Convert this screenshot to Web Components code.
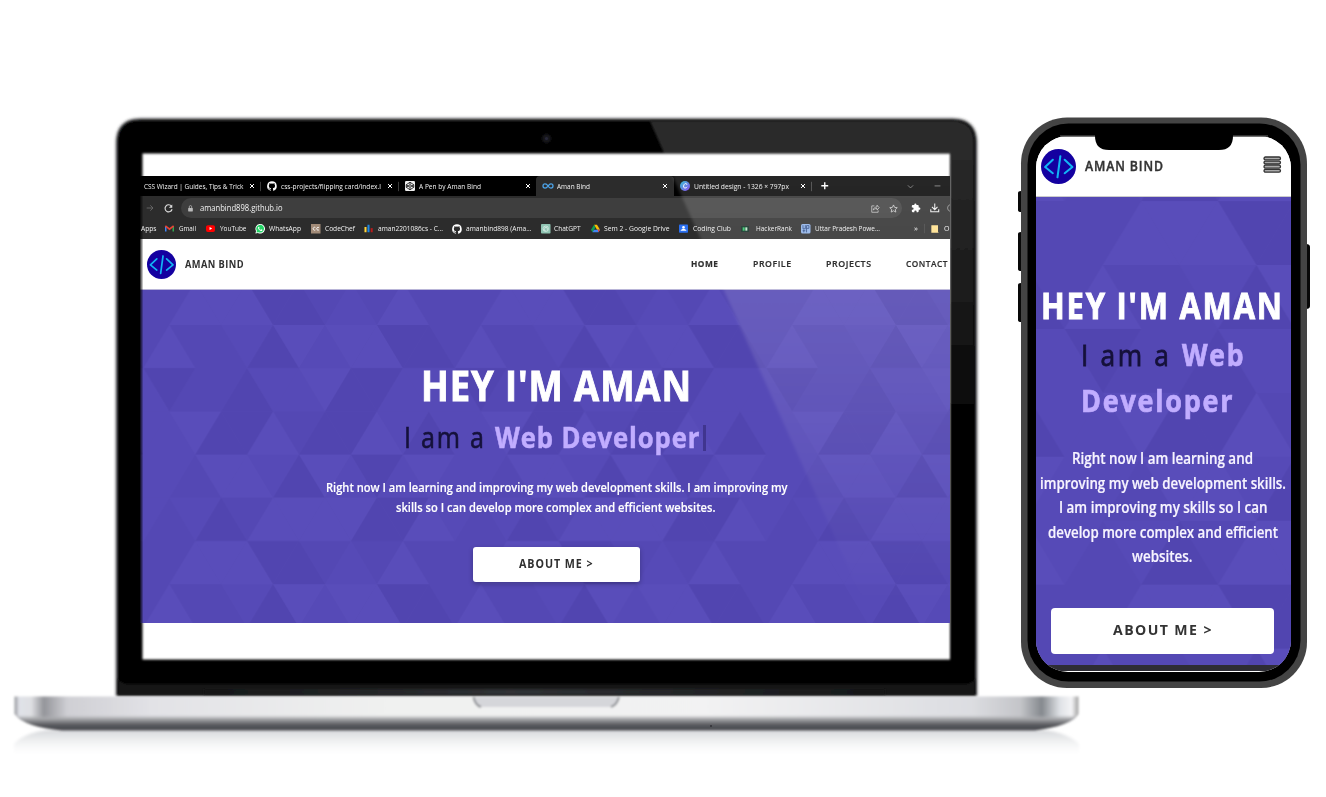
<!DOCTYPE html>
<html lang="en"><head><meta charset="utf-8"><title>Aman Bind – device preview</title>
<style>html,body{margin:0;width:1326px;height:797px;overflow:hidden;background:#fff;font-family:"Open Sans","Noto Sans",sans-serif}</style></head>
<body><device-stage></device-stage>
<script>
const make=(name,html,after)=>customElements.define(name,class extends HTMLElement{
  connectedCallback(){ if(this.shadowRoot)return; const r=this.attachShadow({mode:'open'});
    const t=document.createElement('template'); t.innerHTML=typeof html==='function'?html(this):html;
    r.appendChild(t.content.cloneNode(true)); if(after)after(this,r);}
});

// A single line of text that always fills the width given in its "w" attribute.
make('fit-text','<style>:host{display:block;flex:none;white-space:nowrap}span{display:inline-block;transform-origin:0 50%;white-space:pre}</style><span><slot></slot></span>',(h,r)=>{
  const w=+h.getAttribute('w'),s=r.querySelector('span'); h.style.width=w+'px';
  const ls=parseFloat(getComputedStyle(h).letterSpacing)||0, n=s.getBoundingClientRect().width-ls;
  if(n>0)s.style.transform='scaleX('+(w/n)+')';
});

const icons={
 x:'<path d="M4 4l16 16M20 4L4 20" stroke="#fff" stroke-width="4"/>',
 plus:'<path d="M12 1v22M1 12h22" stroke="#fff" stroke-width="4.4"/>',
 chev:'<path d="M3 8l9 9 9-9" stroke="#999" stroke-width="2.4" fill="none"/>',
 minus:'<path d="M2 10h20" stroke="#999" stroke-width="2.6"/>',
 github:'<path fill="#fff" d="M12 .6A11.7 11.7 0 0 0 8.300 23.400c.6.1.8-.3.8-.6v-2.200c-3.300.7-4-1.400-4-1.400-.5-1.300-1.300-1.700-1.300-1.700-1.100-.7.1-.7.1-.7 1.200.1 1.800 1.200 1.800 1.200 1 1.800 2.800 1.300 3.400 1 .1-.8.4-1.300.8-1.600-2.700-.3-5.500-1.300-5.500-5.900 0-1.300.5-2.300 1.200-3.200-.1-.3-.5-1.500.1-3.100 0 0 1-.3 3.200 1.200a11 11 0 0 1 5.900 0c2.200-1.500 3.200-1.200 3.200-1.200.6 1.600.2 2.800.1 3.100.8.9 1.200 1.900 1.200 3.200 0 4.600-2.800 5.600-5.500 5.900.4.4.8 1.100.8 2.200v3.200c0 .3.2.7.8.6A11.700 11.700 0 0 0 12 .6"/>',
 codepen:'<rect width="24" height="24" rx="3" fill="#eee"/><g fill="none" stroke="#111" stroke-width="2"><path d="M12 3l9 6v6l-9 6-9-6V9z"/><path d="M3 9l9 6 9-6M3 15l9-6 9 6M12 3v6M12 15v6"/></g>',
 inf:'<path d="M12 12c-3-5-5.500-5-7-5a5 5 0 0 0 0 10c2 0 4-1 7-5s5-5 7-5a5 5 0 0 1 0 10c-1.500 0-4 0-7-5z" fill="none" stroke="#4ca3e8" stroke-width="3"/>',
 canva:'<defs><linearGradient id="c" x1="0" x2="1" y2="1"><stop stop-color="#14b9cf"/><stop offset="1" stop-color="#7b2ff0"/></linearGradient></defs><circle cx="12" cy="12" r="12" fill="url(#c)"/><path d="M16.500 9c0-4-5-4-7 0s-1 8 2.500 8c2.500 0 4-1.500 5-3" fill="none" stroke="#fff" stroke-width="2.200"/>',
 arrow:'<path d="M2 12h18M13 4l8 8-8 8" stroke="#777" stroke-width="2.2" fill="none"/>',
 reload:'<path d="M20 6a9.500 9.500 0 1 0 1.500 8" fill="none" stroke="#ddd" stroke-width="3"/><path d="M22 1v9h-9z" fill="#ddd"/>',
 lock:'<rect x="4" y="10" width="16" height="12" rx="1.500" fill="#bbb"/><path d="M8 11V6a4 4 0 0 1 8 0v5" fill="none" stroke="#bbb" stroke-width="2.600"/>',
 share:'<path d="M9 5H2v17h17v-5M6 16c1-6 5-8 10-8V3l6 7-6 6v-4c-4 0-7 1-10 4z" fill="none" stroke="#ccc" stroke-width="2"/>',
 star:'<path d="M12 2.500l3 6.500 7 .8-5.200 4.800 1.400 7L12 18l-6.200 3.600 1.400-7L2 9.800 9 9z" fill="none" stroke="#ddd" stroke-width="2"/>',
 puzzle:'<path fill="#fff" d="M20 11h-1.500V7a2 2 0 0 0-2-2H13V3.500a2.500 2.500 0 0 0-5 0V5H4a2 2 0 0 0-2 2v4h1.500a2.700 2.700 0 0 1 0 5.400H2V20a2 2 0 0 0 2 2h4v-1.500a2.700 2.700 0 0 1 5.400 0V22h3.100a2 2 0 0 0 2-2v-4H20a2.500 2.500 0 0 0 0-5"/>',
 down:'<path d="M12 1v15M5 10l7 7 7-7M2 16v6h20v-6" stroke="#eee" stroke-width="2.700" fill="none"/>',
 ring:'<path d="M24 2A10.500 10.500 0 0 0 24 22" stroke="#888" stroke-width="3" fill="none"/>',
 gmail:'<path d="M2 20V6" stroke="#4285f4" stroke-width="4"/><path d="M22 20V6" stroke="#34a853" stroke-width="4"/><path d="M1 5l11 9 11-9" stroke="#ea4335" stroke-width="4.500" fill="none"/>',
 yt:'<rect y="3" width="24" height="18" rx="5" fill="#f00"/><path d="M9.500 8v8l7-4z" fill="#fff"/>',
 wa:'<path d="M1 23l1.500-6A11.500 11.500 0 1 1 7 21.500z" fill="#fff"/><path d="M3.500 20.500l1-4.200A9.300 9.300 0 1 1 8 19.500z" fill="#25d366"/><path d="M8 6.500c-3 4 4 11.500 8.500 10 2-1 1.500-2.500 1-2.800l-2-1c-1 0-1 1.500-2 1.300-1.500-.5-3-2-3.500-3.500 0-.8 1.300-.8 1-2z" fill="#fff"/>',
 cc:'<rect width="24" height="24" fill="#a28b78"/><path d="M11 9a3.600 3.600 0 1 0 0 6M20 9a3.600 3.600 0 1 0 0 6" fill="none" stroke="#fff" stroke-width="2.300"/>',
 bars:'<path d="M4 22V8" stroke="#ffd43b" stroke-width="5.500"/><path d="M12 22V2" stroke="#1e88e5" stroke-width="5.500"/><path d="M20.500 22V11" stroke="#b71c1c" stroke-width="5.500"/>',
 gpt:'<rect width="24" height="24" rx="2" fill="#8fc3b2"/><g fill="none" stroke="#d9eee7" stroke-width="1.700"><circle cx="12" cy="12" r="7"/><path d="M8 7l8 3v7M16 7l-8 4v7M6 14l7 4"/></g>',
 drive:'<path d="M8 2h8l8 13h-8z" fill="#fbbc04"/><path d="M8 2l4 7L4 22l-4-7z" fill="#0f9d58"/><path d="M8 15h16l-4 7H4z" fill="#4285f4"/><path d="M18 15h6l-4 7z" fill="#ea4335"/>',
 club:'<rect y="1" width="24" height="22" rx="2" fill="#2a6ff0"/><circle cx="12" cy="9" r="3.500" fill="#fff"/><path d="M4 18c2-6 14-6 16 0z" fill="#fff"/>',
 hr:'<rect y="3" width="24" height="18" fill="#0b2b20"/><path d="M5 7h6v10H5z" fill="#2ec866"/><path d="M13 7h6v10h-6z" fill="#b9e8c9"/>',
 up:'<rect width="24" height="24" rx="4" fill="#8fb2e8"/><path d="M5 3v9h6V3M14 21V4h6v7h-6M4 17h7M7 14v7" fill="none" stroke="#24427e" stroke-width="2"/>',
 folder:'<path d="M1 1h20v19l2 3H1z" fill="#ffe08a"/>',
 sep:'<path d="M12 -4v32" stroke="#444" stroke-width="3"/>'
};
make('ui-icon',h=>`<style>:host{display:block;flex:none}svg{display:block;width:100%;height:100%;overflow:visible}</style><svg viewBox="0 0 24 24">${icons[h.getAttribute('name')]}</svg>`,h=>{h.style.width=h.style.height=h.getAttribute('s')+'px'});

// Builds a flow row from [start, width, content]; the gap before each item becomes its margin.
const flow=(from,items)=>{let p=from;return items.map(([x,w,c])=>{const m=x-p;p=x+w;
  return c[0]==='@'?`<ui-icon name="${c.slice(1)}" s="${w}" style="margin-left:${m}px"></ui-icon>`:`<fit-text w="${w}" style="margin-left:${m}px">${c}</fit-text>`}).join('')};

make('brand-mark','<style>:host{display:block;flex:none}svg{display:block;width:100%;height:100%}</style><svg viewBox="0 0 34 34"><circle cx="17" cy="17" r="17" fill="#1400a0"/><g fill="none" stroke="#12b4f5" stroke-width="2" stroke-linecap="round" stroke-linejoin="round"><path d="M11.500 10.500L4 17.500l7.500 6"/><path d="M23 10.500l7.500 7-7.500 6"/><path d="M18.800 7l-2.800 20.500"/></g></svg>');

// Triangle mosaic: "d,u" = down/up triangle, its centre column, then its shade.
const shades={l:'#594dba',m:'#564ab7',d:'#5145b0'};
const mosaic=['u1l u3b d4m u5d d6l u7m d8l u9l d10d u11d d12b',
 'd1d u2b d3b u4d d5m u6m d7l u8d d9d u10m d11m u12m',
 'u1m d2l u3d d4d u5l d6b u7d d8d u9l d10m u11d d12m',
 'u0m d1m u2b d3l u4l d5m u6d d7l u8m d9d u10m d11l u12m',
 'u1b d2m u3d d4b u5l d6l u7l d8l u9d d10d u11l d12m',
 'd1b u2l d3l u4l d5d u6d d7b u8m d9b u10l d11b u12b'];
const polys=()=>mosaic.map((row,r)=>row.split(' ').map(t=>{const[,k,c,s]=t.match(/(.)(\d+)(.)/);if(s==='b')return'';
  const X=25.95,Y=43.2,a=c*X,y=r*Y,f=s=>`<path fill="${shades[s]}" d="${k==='u'?`M${a} ${y}L${a-X} ${y+Y}H${a+X}z`:`M${a} ${y+Y}L${a-X} ${y}H${a+X}z`}"/>`;
  return f(s)+(c==12?`<g transform="translate(-311.4)">${f(s)}</g>`:'')}).join('')).join('');
make('mosaic-panel',h=>`<style>:host{display:grid;background:#5347b3}svg,.c{grid-area:1/1;min-width:0;min-height:0}svg{width:100%;height:100%}.c{display:block}</style>
<svg><defs><pattern id="p" patternUnits="userSpaceOnUse" width="311.4" height="259.2" patternTransform="translate(${h.getAttribute('ox')} ${h.getAttribute('oy')}) scale(${h.getAttribute('k')})"><rect width="311.4" height="259.2" fill="#5448b4"/>${polys()}</pattern></defs><rect width="100%" height="100%" fill="url(#p)"/></svg><div class="c"><slot></slot></div>`);

make('browser-chrome',`<style>:host{display:block;color:#f2f2f2;font:7.200px "Open Sans","Noto Sans",sans-serif;background:#2c2c2c}
.r{display:flex;align-items:center;height:20px;line-height:19px}.tabs{background:#000}.in{display:flex;align-items:center;height:20px}
.on{background:#2c2c2c;width:138px;border-radius:4px 4px 0 0}.tool{height:22px;line-height:22px;padding-top:1px;margin-bottom:-1px}.pill{display:flex;align-items:center;background:#3e3e3e;border-radius:10px;width:722px;height:20px;margin-left:8px;font-size:8.300px;line-height:20px}.bm{height:21px;line-height:19px}</style>
<div class="r tabs">${flow(140,[[143.5,99.500,'CSS Wizard | Guides, Tips &amp; Trick'],[249,6,'@x'],[257,7,'@sep'],[267,10,'@github'],[281,100,'css-projects/flipping card/index.l'],[386.500,6,'@x'],[395,7,'@sep'],[405,10,'@codepen'],[419,62,'A Pen by Aman Bind'],[524.500,6,'@x']])}
<div class="in on" style="margin-left:5px">${flow(535.500,[[542.500,10,'@inf'],[557,33,'Aman Bind'],[662,6,'@x']])}</div>
${flow(673.500,[[680,10,'@canva'],[694,95,'Untitled design - 1326 × 797px'],[799.500,6,'@x'],[808,7,'@sep'],[820.500,7.500,'@plus'],[907,7,'@chev'],[933.500,7,'@minus']])}</div>
<div class="r tool">${flow(140,[[145.500,8,'@arrow'],[163.500,9,'@reload']])}<div class="pill">${flow(180.500,[[187,7,'@lock'],[200,82.500,'amanbind898.github.io'],[870.500,9,'@share'],[889,9,'@star']])}</div>${flow(902.500,[[912,10,'@puzzle'],[930.500,9.500,'@down'],[943,8,'@ring']])}</div>
<div class="r bm">${flow(140,[[140.500,15.500,'Apps'],[165,9,'@gmail'],[179,17,'Gmail'],[206,9,'@yt'],[219.500,26.500,'YouTube'],[255,10,'@wa'],[269,32,'WhatsApp'],[311,9.500,'@cc'],[324.500,30,'CodeChef'],[364,9,'@bars'],[378,65,'aman2201086cs - C...'],[452,10,'@github'],[466,65.500,'amanbind898 (Ama...'],[540.500,9.500,'@gpt'],[554,26.500,'ChatGPT'],[590.500,9,'@drive'],[604,65.500,'Sem 2 - Google Drive'],[679,9,'@club'],[693,38,'Coding Club'],[740.500,8,'@hr'],[756,36,'HackerRank'],[800.500,9.500,'@up'],[815,65,'Uttar Pradesh Powe...'],[914,4,'»'],[921,7,'@sep'],[930.500,8,'@folder'],[944,5.500,'O']])}</div>`);

make('desktop-site',`<style>:host{display:block;color:#2f2f2f;font-weight:700}header{display:flex;align-items:center;height:50px;border-bottom:1px solid #b9b5d8;background:#fff}
brand-mark{width:29px;height:29px;margin-left:7px}header fit-text{line-height:20px;margin-top:-1px}mosaic-panel{height:333px}.l{display:flex}
h1,p{margin:0;font-size:inherit}.h{color:#fff;font-size:41px;line-height:50px;padding:70px 0 7px 280.500px;-webkit-text-stroke:.9px #fff}.s{color:#c1adff;font-size:28.500px;line-height:40px;letter-spacing:1px;padding-left:264px;margin-bottom:20.500px;-webkit-text-stroke:.500px #c1adff}
.s i{display:block;width:2.500px;height:26px;background:#40358f;margin:8px 0 0 4px}p{color:#fff;font-size:12.500px;line-height:20.500px;font-weight:600;-webkit-text-stroke:.150px #fff}.b{width:167px;height:34.500px;margin:28.500px 0 0 332.500px;background:#fff;border-radius:3px;box-shadow:0 2px 5px #0004;font-size:11.500px;line-height:34px;letter-spacing:1px}</style>
<header><brand-mark></brand-mark><fit-text w="58.5" style="margin-left:8.500px;font-size:11px;letter-spacing:.5px">AMAN BIND</fit-text>
<nav class="l" style="font-size:9.500px;font-weight:600;letter-spacing:.6px;-webkit-text-stroke:.200px #2f2f2f"><fit-text w="27" style="margin-left:448px;font-weight:700">HOME</fit-text><fit-text w="38" style="margin-left:35px">PROFILE</fit-text><fit-text w="45" style="margin-left:35px">PROJECTS</fit-text><fit-text w="41.5" style="margin-left:35px">CONTACT</fit-text></nav></header>
<mosaic-panel ox="3.400" oy="35" k="1"><div class="l h"><fit-text w="270" style="letter-spacing:1px">HEY I'M AMAN</fit-text></div>
<div class="l s"><fit-text w="80" style="color:#15113a;font-weight:400;letter-spacing:2px;-webkit-text-stroke:.600px #15113a">I am a</fit-text><fit-text w="204.500" style="margin-left:10.500px">Web Developer</fit-text><i></i></div>
<p><fit-text w="461.500" style="margin-left:185.500px">Right now I am learning and improving my web development skills. I am improving my</fit-text><fit-text w="319.500" style="margin-left:256px">skills so I can develop more complex and efficient websites.</fit-text></p>
<div class="b l"><fit-text w="73.500" style="margin-left:46.500px">ABOUT ME &gt;</fit-text></div></mosaic-panel>`);

make('phone-site',`<style>:host{display:block;color:#333;font-weight:700}header{display:flex;height:60px;border-bottom:1px solid #ccc;background:#fff}brand-mark{width:35px;height:35px;margin:13px 0 0 5px}
mosaic-panel{height:468px}.l{display:flex}.h{color:#fff;font-size:35px;line-height:50px;padding:84px 0 1px 4.500px;-webkit-text-stroke:.9px #fff}.s{color:#c1adff;font-size:30px;line-height:46px;letter-spacing:2px;padding-left:44.500px;-webkit-text-stroke:.700px #c1adff}
p{margin:22px 0 39px;color:#f7f4ff;font-size:15.300px;line-height:24.500px;font-weight:600;-webkit-text-stroke:.200px #f7f4ff}.b{background:#fff;border-radius:4px;width:223px;height:46px;margin-left:15px;font-size:15px;line-height:43px;letter-spacing:1.500px}.bar{height:6px;background:#2e2d35}</style>
<header><brand-mark></brand-mark><fit-text w="78" style="margin:20px 0 0 9px;font-size:14px;line-height:20px;letter-spacing:1px;font-weight:600;-webkit-text-stroke:.400px #333">AMAN BIND</fit-text>
<svg width="19" height="18" viewBox="0 0 19 18" style="margin:20px 0 0 100px"><g fill="#aaa" stroke="#333" stroke-width="1.300"><rect x="1" y="1" width="16.500" height="2.900" rx="1.450"/><rect x="1" y="5.100" width="16.500" height="2.900" rx="1.450"/><rect x="1" y="9.200" width="16.500" height="2.900" rx="1.450"/><rect x="1" y="13.300" width="16.500" height="2.900" rx="1.450"/></g></svg></header>
<mosaic-panel ox="28.500" oy="68" k="1.480"><div class="l h"><fit-text w="241" style="letter-spacing:2px">HEY I'M AMAN</fit-text></div>
<div class="l s"><fit-text w="88" style="color:#15113a;font-weight:400;letter-spacing:3px;-webkit-text-stroke:.800px #15113a">I am a</fit-text><fit-text w="61.500" style="margin-left:13.500px">Web</fit-text></div><div class="l s"><fit-text w="151.500">Developer</fit-text></div>
<p><fit-text w="181" style="margin-left:36px">Right now I am learning and</fit-text><fit-text w="246" style="margin-left:3.500px">improving my web development skills.</fit-text><fit-text w="208.500" style="margin-left:22.500px">I am improving my skills so I can</fit-text><fit-text w="230" style="margin-left:11.500px">develop more complex and efficient</fit-text><fit-text w="60.500" style="margin-left:96px">websites.</fit-text></p>
<div class="b l"><fit-text w="98.500" style="margin-left:62px">ABOUT ME &gt;</fit-text></div></mosaic-panel><div class="bar"></div>`);

// Laptop artwork uses stage coordinates; the page itself sits in the slot.
make('laptop-frame',`<style>:host{display:grid;width:1100px;height:797px}.art,.glass,.screen{grid-area:1/1;pointer-events:none}.screen{margin:176px 0 0 140px;width:810px;height:447px;overflow:hidden}.art,.glass{width:1100px;height:797px}</style>
<svg class="art" viewBox="0 0 1100 797"><defs><filter id="b" x="-5%" y="-5%" width="110%" height="110%"><feGaussianBlur stdDeviation="1.500"/></filter><filter id="s" x="-5%" y="-5%" width="110%" height="110%"><feGaussianBlur stdDeviation=".9"/></filter>
<linearGradient id="metal" gradientUnits="userSpaceOnUse" x1="14" x2="1079"><stop stop-color="#8b8d92"/><stop offset=".005" stop-color="#e0e2e8"/><stop offset=".016" stop-color="#dfe0e3"/><stop offset=".028" stop-color="#94959a"/><stop offset=".05" stop-color="#cfcfd4"/><stop offset=".13" stop-color="#e2e2e6"/><stop offset=".35" stop-color="#f0f1f0"/><stop offset=".65" stop-color="#f2f2f3"/><stop offset=".9" stop-color="#dcdde1"/><stop offset=".945" stop-color="#c4c5c9"/><stop offset=".965" stop-color="#85898e"/><stop offset=".982" stop-color="#dfe2e6"/><stop offset=".993" stop-color="#f4f4f6"/><stop offset="1" stop-color="#999"/></linearGradient>
<linearGradient id="lip" x2="0" y2="1"><stop stop-color="#b4b5b8" stop-opacity="0"/><stop offset=".25" stop-color="#a5a6a9"/><stop offset=".65" stop-color="#57585c"/><stop offset="1" stop-color="#48494e"/></linearGradient>
<linearGradient id="refl" x2="0" y2="1"><stop stop-color="#d5d7da"/><stop offset=".45" stop-color="#f1f2f3"/><stop offset="1" stop-color="#fff" stop-opacity="0"/></linearGradient>
<linearGradient id="side" gradientUnits="userSpaceOnUse" x1="0" y1="118" x2="0" y2="440"><stop stop-color="#2d2d2d"/><stop offset=".55" stop-color="#1b1b1b"/><stop offset="1" stop-color="#000"/></linearGradient>
<linearGradient id="hinge"><stop stop-color="#161717"/><stop offset=".45" stop-color="#303236"/><stop offset="1" stop-color="#161717"/></linearGradient></defs>
<path filter="url(#b)" fill="url(#refl)" d="M14 744Q26 730 62 729H1030Q1065 730 1079 744V758H14z"/>
<path filter="url(#b)" fill="#000" stroke="#3a3b3e" stroke-width="1" d="M116.500 696V143Q116.500 119 140 119H953Q976.500 119 976.500 143V696z"/>
<path filter="url(#s)" fill="url(#side)" d="M650 121H953Q974 121 974 143V660H950V153H664z"/>
<path filter="url(#s)" fill="#161717" d="M118 678Q120 684 130 684H963Q973 684 975 678V695H118z"/><path filter="url(#s)" fill="url(#hinge)" d="M204 689H885V695H204z"/>
<circle cx="546.500" cy="138.500" r="4.500" fill="#17171b" filter="url(#s)"/><circle cx="546.500" cy="138.500" r="1.600" fill="#272738"/>
<rect x="142.500" y="153.500" width="807.500" height="506" fill="#fff" filter="url(#s)"/>
<g filter="url(#s)"><path fill="url(#metal)" d="M14.500 696.500H1078.500V714Q1074 724 1035 730H65Q24 727 14.500 714z"/><path fill="url(#lip)" d="M15 715H1078Q1070 726 1035 730.500H62Q25 727 15 715z"/>
<path fill="#d5d6da" d="M473 697H619Q618 707 611 707H481Q474 707 473 697z"/><path fill="none" stroke="#8c8e93" stroke-width="2" d="M473.500 697Q475 705 481 707M619 697Q617 705 611 707"/></g><circle cx="711" cy="726" r="1" fill="#303136"/></svg>
<div class="screen"><slot></slot></div>
<svg class="glass" viewBox="0 0 1100 797"><defs><linearGradient id="g" gradientUnits="userSpaceOnUse" x1="0" y1="176" x2="0" y2="600"><stop stop-color="#fff" stop-opacity=".15"/><stop offset=".4" stop-color="#fff" stop-opacity=".1"/><stop offset="1" stop-color="#fff" stop-opacity="0"/></linearGradient><linearGradient id="e"><stop stop-color="#000"/><stop offset="1" stop-color="#000" stop-opacity="0"/></linearGradient><filter id="f"><feGaussianBlur stdDeviation="1.500"/></filter><clipPath id="k"><path d="M140 176H950V623H140z"/></clipPath></defs>
<g clip-path="url(#k)"><path filter="url(#f)" fill="url(#g)" d="M668 166L864 602H970V166z"/><path fill="url(#e)" d="M139.500 176H143.500V623H139.500z"/></g></svg>`);

make('phone-frame',`<style>:host{display:grid;width:294px;height:572px}.art,.notch,.screen{grid-area:1/1}.art,.notch{width:294px;height:572px}.screen{margin:19px 0 0 18px;width:255px;height:535.500px;overflow:hidden;border-radius:32px;background:#fff}.notch{pointer-events:none}</style>
<svg class="art" viewBox="1018 117 294 572"><path fill="#080808" d="M1018 193q0-2 3-2v21q-3 0-3-2zM1018 234q0-2 3-2v39q-3 0-3-2zM1018 285q0-2 3-2v39q-3 0-3-2zM1306 244q4 0 4 3v59q0 3-4 3z"/><rect x="1021" y="117.500" width="286" height="570.500" rx="46" fill="#444"/><rect x="1027.500" y="123.500" width="273" height="558" rx="41" fill="#000"/></svg>
<div class="screen"><slot></slot></div>
<svg class="notch" viewBox="1018 117 294 572"><path d="M1060 136H1096M1232 136H1268" stroke="#444" stroke-width="1.500"/><path d="M1095 134H1233V136Q1233 150 1219 150H1109Q1095 150 1095 136z"/></svg>`);

make('device-stage',`<style>:host{display:grid;grid-template-columns:1018px 308px;height:797px;overflow:hidden}phone-frame{margin-top:117px;z-index:1}</style>
<laptop-frame><browser-chrome></browser-chrome><desktop-site></desktop-site></laptop-frame><phone-frame><phone-site></phone-site></phone-frame>`);
</script></body></html>
